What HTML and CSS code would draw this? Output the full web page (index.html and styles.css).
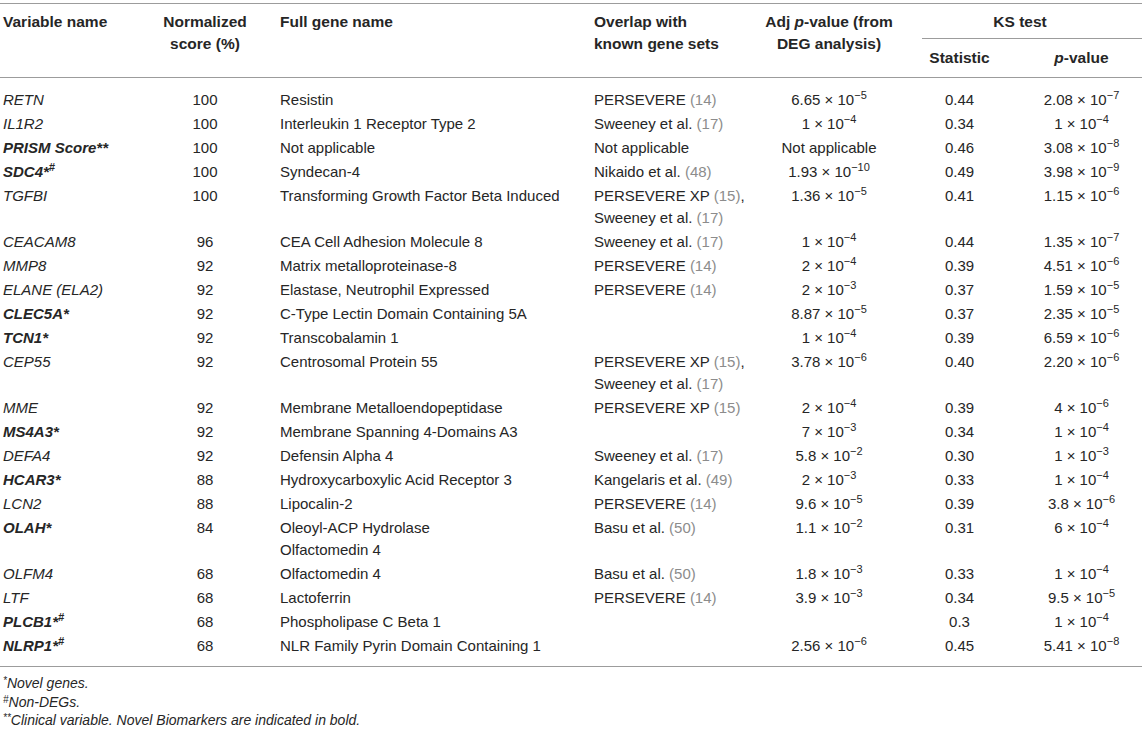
FILE: index.html
```html
<!DOCTYPE html>
<html lang="en">
<head>
<meta charset="utf-8">
<title>Table</title>
<link rel="stylesheet" href="styles.css">
</head>
<body>
<div class="wrap">
<table class="tbl">
  <colgroup>
    <col class="c1"><col class="c2"><col class="c3"><col class="c4"><col class="c5"><col class="c6"><col class="c7">
  </colgroup>
  <thead>
    <tr class="hr1">
      <th rowspan="2" class="h left p1">Variable name</th>
      <th rowspan="2" class="h center">Normalized<br>score (%)</th>
      <th rowspan="2" class="h left p3">Full gene name</th>
      <th rowspan="2" class="h left p1">Overlap with<br>known gene sets</th>
      <th rowspan="2" class="h center">Adj <i>p</i>-value (from<br>DEG analysis)</th>
      <th colspan="2" class="ks"><div class="ks-in">KS test</div></th>
    </tr>
    <tr class="hr2">
      <th class="sub">Statistic</th>
      <th class="sub"><i>p</i>-value</th>
    </tr>
  </thead>
  <tbody>
    <tr class="first"><td class="v"><i>RETN</i></td><td>100</td><td>Resistin</td><td>PERSEVERE <span class="ref">(14)</span></td><td>6.65 × 10<sup>−5</sup></td><td>0.44</td><td>2.08 × 10<sup>−7</sup></td></tr>
    <tr><td class="v"><i>IL1R2</i></td><td>100</td><td>Interleukin 1 Receptor Type 2</td><td>Sweeney et al. <span class="ref">(17)</span></td><td>1 × 10<sup>−4</sup></td><td>0.34</td><td>1 × 10<sup>−4</sup></td></tr>
    <tr><td class="v"><b><i>PRISM Score**</i></b></td><td>100</td><td>Not applicable</td><td>Not applicable</td><td>Not applicable</td><td>0.46</td><td>3.08 × 10<sup>−8</sup></td></tr>
    <tr><td class="v"><b><i>SDC4*<sup>#</sup></i></b></td><td>100</td><td>Syndecan-4</td><td>Nikaido et al. <span class="ref">(48)</span></td><td>1.93 × 10<sup>−10</sup></td><td>0.49</td><td>3.98 × 10<sup>−9</sup></td></tr>
    <tr><td class="v"><i>TGFBI</i></td><td>100</td><td>Transforming Growth Factor Beta Induced</td><td>PERSEVERE XP <span class="ref">(15)</span>,<br>Sweeney et al. <span class="ref">(17)</span></td><td>1.36 × 10<sup>−5</sup></td><td>0.41</td><td>1.15 × 10<sup>−6</sup></td></tr>
    <tr><td class="v"><i>CEACAM8</i></td><td>96</td><td>CEA Cell Adhesion Molecule 8</td><td>Sweeney et al. <span class="ref">(17)</span></td><td>1 × 10<sup>−4</sup></td><td>0.44</td><td>1.35 × 10<sup>−7</sup></td></tr>
    <tr><td class="v"><i>MMP8</i></td><td>92</td><td>Matrix metalloproteinase-8</td><td>PERSEVERE <span class="ref">(14)</span></td><td>2 × 10<sup>−4</sup></td><td>0.39</td><td>4.51 × 10<sup>−6</sup></td></tr>
    <tr><td class="v"><i>ELANE (ELA2)</i></td><td>92</td><td>Elastase, Neutrophil Expressed</td><td>PERSEVERE <span class="ref">(14)</span></td><td>2 × 10<sup>−3</sup></td><td>0.37</td><td>1.59 × 10<sup>−5</sup></td></tr>
    <tr><td class="v"><b><i>CLEC5A*</i></b></td><td>92</td><td>C-Type Lectin Domain Containing 5A</td><td></td><td>8.87 × 10<sup>−5</sup></td><td>0.37</td><td>2.35 × 10<sup>−5</sup></td></tr>
    <tr><td class="v"><b><i>TCN1*</i></b></td><td>92</td><td>Transcobalamin 1</td><td></td><td>1 × 10<sup>−4</sup></td><td>0.39</td><td>6.59 × 10<sup>−6</sup></td></tr>
    <tr><td class="v"><i>CEP55</i></td><td>92</td><td>Centrosomal Protein 55</td><td>PERSEVERE XP <span class="ref">(15)</span>,<br>Sweeney et al. <span class="ref">(17)</span></td><td>3.78 × 10<sup>−6</sup></td><td>0.40</td><td>2.20 × 10<sup>−6</sup></td></tr>
    <tr><td class="v"><i>MME</i></td><td>92</td><td>Membrane Metalloendopeptidase</td><td>PERSEVERE XP <span class="ref">(15)</span></td><td>2 × 10<sup>−4</sup></td><td>0.39</td><td>4 × 10<sup>−6</sup></td></tr>
    <tr><td class="v"><b><i>MS4A3*</i></b></td><td>92</td><td>Membrane Spanning 4-Domains A3</td><td></td><td>7 × 10<sup>−3</sup></td><td>0.34</td><td>1 × 10<sup>−4</sup></td></tr>
    <tr><td class="v"><i>DEFA4</i></td><td>92</td><td>Defensin Alpha 4</td><td>Sweeney et al. <span class="ref">(17)</span></td><td>5.8 × 10<sup>−2</sup></td><td>0.30</td><td>1 × 10<sup>−3</sup></td></tr>
    <tr><td class="v"><b><i>HCAR3*</i></b></td><td>88</td><td>Hydroxycarboxylic Acid Receptor 3</td><td>Kangelaris et al. <span class="ref">(49)</span></td><td>2 × 10<sup>−3</sup></td><td>0.33</td><td>1 × 10<sup>−4</sup></td></tr>
    <tr><td class="v"><i>LCN2</i></td><td>88</td><td>Lipocalin-2</td><td>PERSEVERE <span class="ref">(14)</span></td><td>9.6 × 10<sup>−5</sup></td><td>0.39</td><td>3.8 × 10<sup>−6</sup></td></tr>
    <tr><td class="v"><b><i>OLAH*</i></b></td><td>84</td><td>Oleoyl-ACP Hydrolase<br>Olfactomedin 4</td><td>Basu et al. <span class="ref">(50)</span></td><td>1.1 × 10<sup>−2</sup></td><td>0.31</td><td>6 × 10<sup>−4</sup></td></tr>
    <tr><td class="v"><i>OLFM4</i></td><td>68</td><td>Olfactomedin 4</td><td>Basu et al. <span class="ref">(50)</span></td><td>1.8 × 10<sup>−3</sup></td><td>0.33</td><td>1 × 10<sup>−4</sup></td></tr>
    <tr><td class="v"><i>LTF</i></td><td>68</td><td>Lactoferrin</td><td>PERSEVERE <span class="ref">(14)</span></td><td>3.9 × 10<sup>−3</sup></td><td>0.34</td><td>9.5 × 10<sup>−5</sup></td></tr>
    <tr><td class="v"><b><i>PLCB1*<sup>#</sup></i></b></td><td>68</td><td>Phospholipase C Beta 1</td><td></td><td></td><td>0.3</td><td>1 × 10<sup>−4</sup></td></tr>
    <tr class="last"><td class="v"><b><i>NLRP1*<sup>#</sup></i></b></td><td>68</td><td>NLR Family Pyrin Domain Containing 1</td><td></td><td>2.56 × 10<sup>−6</sup></td><td>0.45</td><td>5.41 × 10<sup>−8</sup></td></tr>
  </tbody>
</table>
<div class="notes">
  <p><sup>*</sup>Novel genes.</p>
  <p><sup>#</sup>Non-DEGs.</p>
  <p><sup>**</sup>Clinical variable. Novel Biomarkers are indicated in bold.</p>
</div>
</div>
</body>
</html>
```

FILE: styles.css
```css
html, body {
  margin: 0;
  padding: 0;
  background: #ffffff;
}

body {
  font-family: "Liberation Sans", Arial, sans-serif;
  color: #262626;
}

.wrap {
  padding-top: 3px;
}

.tbl {
  width: 1142px;
  border-collapse: collapse;
  table-layout: fixed;
  font-size: 15px;
  line-height: 22px;
  border-top: 1px solid #9c9c9c;
}

.c1 { width: 150px; }
.c2 { width: 110px; }
.c3 { width: 331px; }
.c4 { width: 169px; }
.c5 { width: 138px; }
.c6 { width: 123px; }
.c7 { width: 121px; }

th {
  font-weight: bold;
  font-size: 15.5px;
  padding: 0;
}

th.h {
  vertical-align: top;
  padding-top: 7px;
  border-bottom: 1px solid #9c9c9c;
}

th.left { text-align: left; }
th.center { text-align: center; }
th.p1 { padding-left: 3px; }
th.p3 { padding-left: 20px; }

th.ks {
  text-align: center;
  vertical-align: top;
  padding-top: 7px;
}

.ks-in {
  margin-left: 24px;
  padding-right: 24px;
  padding-bottom: 5px;
  border-bottom: 1px solid #9c9c9c;
}

th.sub {
  text-align: center;
  vertical-align: top;
  padding-top: 7.5px;
  padding-bottom: 8.5px;
  border-bottom: 1px solid #9c9c9c;
}

td {
  padding: 1px 0;
  vertical-align: top;
  text-align: center;
  white-space: nowrap;
}

td:nth-child(1) { text-align: left; padding-left: 3px; }
td:nth-child(3) { text-align: left; padding-left: 20px; }
td:nth-child(4) { text-align: left; padding-left: 3px; }

tr.first td { padding-top: 11px; }
tr.last td {
  padding-bottom: 9px;
  border-bottom: 1px solid #9c9c9c;
}

.ref { color: #8c8c8c; }

sup {
  font-size: 11px;
  line-height: 0;
  vertical-align: 6px;
}

.notes {
  margin-top: 7px;
  font-size: 14px;
  line-height: 18.5px;
  font-style: italic;
}

.notes p {
  margin: 0;
  padding-left: 3px;
}

.notes sup {
  font-size: 10px;
  vertical-align: 4px;
}
```
